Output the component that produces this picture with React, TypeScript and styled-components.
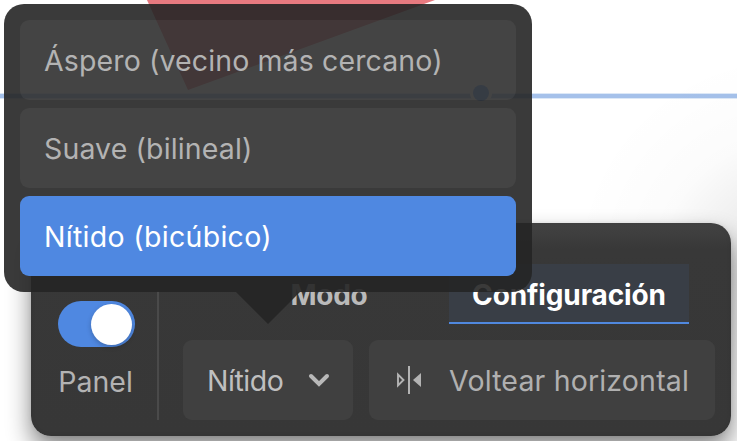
import React from "react";
import styled, { createGlobalStyle } from "styled-components";

const GlobalStyle = createGlobalStyle`
  body { margin: 0; background: #fff; }
  *, *::before, *::after { box-sizing: border-box; }
`;

const Stage = styled.main`
  position: relative;
  width: 737px;
  height: 441px;
  overflow: hidden;
  background: #fff;
  font-family: Inter, "Liberation Sans", sans-serif;
  font-size: 28.5px;
  color: #b3b3b3;
`;

const Canvas = styled.svg`
  position: absolute;
  inset: 0;
`;

const Panel = styled.section`
  position: absolute;
  left: 31px;
  top: 223px;
  width: 700px;
  height: 213px;
  padding-right: 16px;
  display: grid;
  grid-template-columns: 126px 2px 1fr;
  border-radius: 20px;
  background: linear-gradient(#434343, #383838 26px, #373737);
  box-shadow: 0 13px 25px rgba(0, 0, 0, 0.48), 0 0 4px rgba(0, 0, 0, 0.08),
    inset 0 0 5px rgba(0, 0, 0, 0.08);
`;

const ToggleColumn = styled.div`
  display: flex;
  flex-direction: column;
  align-items: center;
  padding: 78px 0 0 4px;
`;

const Toggle = styled.button`
  display: flex;
  justify-content: flex-end;
  align-items: center;
  width: 77px;
  height: 46px;
  padding: 0 3px;
  border: 0;
  border-radius: 23px;
  background: #4f88e1;
`;

const Knob = styled.span`
  width: 41px;
  height: 41px;
  border-radius: 50%;
  background: #fff;
  box-shadow: 0 2px 5px rgba(0, 0, 0, 0.22);
`;

const Label = styled.span<{ $spacing?: number }>`
  line-height: 40px;
  white-space: nowrap;
  letter-spacing: ${(p) => p.$spacing ?? 0}px;
`;

const ToggleLabel = styled(Label)`
  margin: 15px 1px 0 0;
`;

const Divider = styled.div`
  margin: 68px 0 16px;
  background: #4a4a4a;
`;

const Content = styled.div`
  padding: 41px 0 16px 24px;
  display: flex;
  flex-direction: column;
  gap: 16px;
`;

const Tabs = styled.nav`
  display: grid;
  grid-template-columns: 240px 240px;
  justify-content: center;
  height: 60px;
`;

const Tab = styled.div<{ $active?: boolean }>`
  display: flex;
  align-items: center;
  justify-content: center;
  padding-top: 3px;
  border-bottom: 2px solid ${(p) => (p.$active ? "#5088de" : "transparent")};
  background: ${(p) => (p.$active ? "#393e46" : "transparent")};
  color: ${(p) => (p.$active ? "#fff" : "#bababa")};
  font-size: 28px;
  font-weight: 700;
`;

const Actions = styled.div`
  display: grid;
  grid-template-columns: 170px 1fr;
  gap: 16px;
  height: 80px;
`;

const Action = styled.button<{ $strong?: boolean }>`
  display: flex;
  align-items: center;
  padding: 2px 23px 0 24px;
  border: 0;
  border-radius: 9px;
  background: #404040;
  color: ${(p) => (p.$strong ? "#bfbfbf" : "#b0b0b0")};
  font: inherit;
`;

const ChevronIcon = styled.svg`
  margin: -2px 0 0 auto;
`;

const FlipIcon = styled.svg`
  margin: -3px 26px 0 2px;
`;

const Popup = styled.div`
  position: absolute;
  left: 4px;
  top: 4px;
  width: 528px;
  height: 288px;
  padding: 16px;
  display: flex;
  flex-direction: column;
  gap: 8px;
  border-radius: 20px;
  background: rgba(37, 37, 37, 0.9);
`;

const PopupArrow = styled.svg`
  position: absolute;
  left: 232px;
  top: 288px;
`;

const Option = styled.div<{ $selected?: boolean }>`
  flex: none;
  display: flex;
  align-items: center;
  height: 80px;
  padding: 2px 24px 0;
  border-radius: 9px;
  background: ${(p) => (p.$selected ? "#4f88e1" : "rgba(255, 255, 255, 0.05)")};
  color: ${(p) => (p.$selected ? "#fff" : "#b3b3b3")};
`;

export default function App() {
  return (
    <>
      <GlobalStyle />
      <Stage>
        <Canvas width="737" height="441" viewBox="0 0 737 441">
          <defs>
            <radialGradient id="shade" gradientUnits="userSpaceOnUse" cx="790" cy="270" r="220">
              <stop offset="0" stopColor="#000" stopOpacity="0.18" />
              <stop offset="0.3" stopColor="#000" stopOpacity="0.07" />
              <stop offset="0.6" stopColor="#000" stopOpacity="0.015" />
              <stop offset="1" stopColor="#000" stopOpacity="0" />
            </radialGradient>
          </defs>
          <path d="M147 0H435L188 90Z" fill="#e87a80" />
          <path d="M0 96H737" stroke="#dce8f7" strokeWidth="6" />
          <path d="M0 96H737" stroke="#a5c1ea" strokeWidth="4" />
          <circle cx="481" cy="93" r="11" fill="#fff" />
          <circle cx="481" cy="93" r="8" fill="#6fa8ff" />
          <rect x="540" width="197" height="441" fill="url(#shade)" />
        </Canvas>

        <Panel>
          <ToggleColumn>
            <Toggle role="switch" aria-checked="true">
              <Knob />
            </Toggle>
            <ToggleLabel>Panel</ToggleLabel>
          </ToggleColumn>
          <Divider />
          <Content>
            <Tabs>
              <Tab>
                <Label $spacing={-0.3}>Modo</Label>
              </Tab>
              <Tab $active>
                <Label $spacing={-0.12}>Configuración</Label>
              </Tab>
            </Tabs>
            <Actions>
              <Action $strong>
                <Label $spacing={-0.45}>Nítido</Label>
                <ChevronIcon width="22" height="14" viewBox="0 0 22 14">
                  <path
                    d="M3 3L11 11L19 3"
                    fill="none"
                    stroke="#b9b9b9"
                    strokeWidth="4"
                    strokeLinecap="round"
                    strokeLinejoin="miter"
                  />
                </ChevronIcon>
              </Action>
              <Action>
                <FlipIcon width="28" height="30" viewBox="0 0 28 30">
                  <path d="M3 9.5V20.5L8.5 15Z" fill="none" stroke="#b3b3b3" strokeWidth="1.9" />
                  <path d="M14 1V29" stroke="#b3b3b3" strokeWidth="2" />
                  <path d="M26 8V22L18 15Z" fill="#b3b3b3" />
                </FlipIcon>
                <Label $spacing={0.17}>Voltear horizontal</Label>
              </Action>
            </Actions>
          </Content>
        </Panel>

        <Popup role="listbox">
          <Option role="option">
            <Label $spacing={0.12}>Áspero (vecino más cercano)</Label>
          </Option>
          <Option role="option">
            <Label $spacing={0.13}>Suave (bilineal)</Label>
          </Option>
          <Option role="option" $selected>
            <Label $spacing={0.3}>Nítido (bicúbico)</Label>
          </Option>
          <PopupArrow width="64" height="32" viewBox="0 0 64 32">
            <path d="M0 0H64L32 32Z" fill="#252525" fillOpacity="0.9" />
          </PopupArrow>
        </Popup>
      </Stage>
    </>
  );
}
